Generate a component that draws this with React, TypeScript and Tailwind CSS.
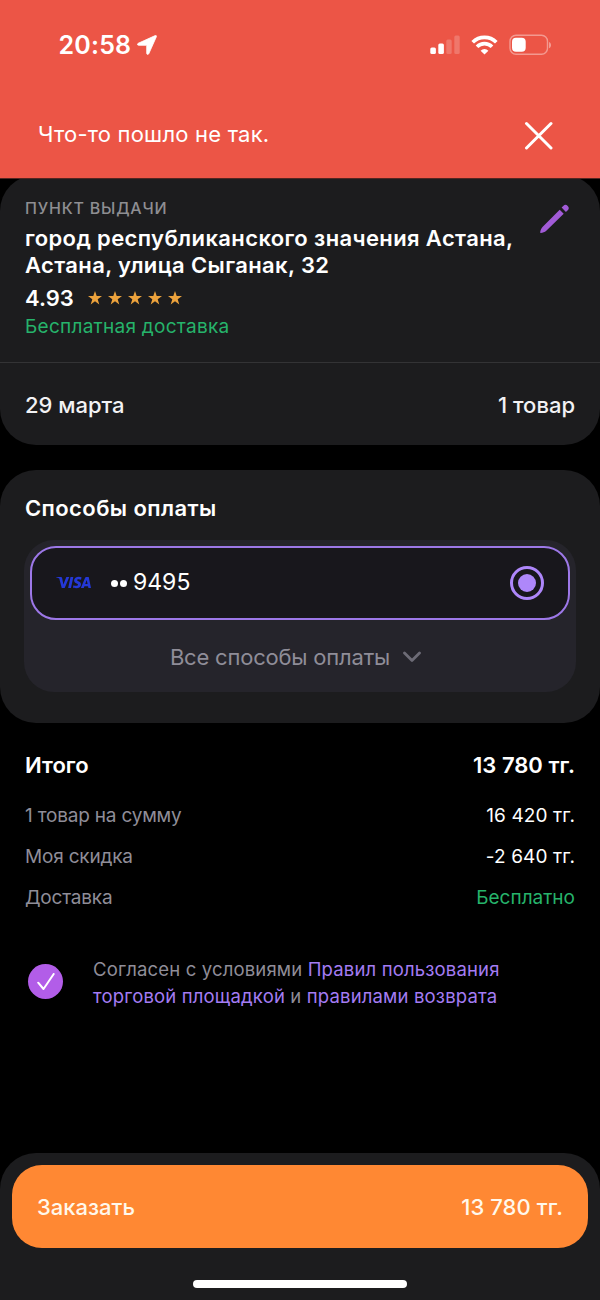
import { ReactNode } from "react";
import { SiVisa } from "react-icons/si";

function StatusBar() {
  return (
    <div className="flex h-[90px] items-center justify-between pl-[58.5px] pr-[48px]">
      <div className="flex items-center gap-[6px]">
        <span className="text-[25px] font-semibold leading-[30px] tracking-[0.2px]">20:58</span>
        <svg width="20" height="20" viewBox="0 0 20 20" fill="currentColor" stroke="currentColor" strokeWidth="0.8" strokeLinejoin="round">
          <path d="M18.2.6 1.200 8.300c-1.100.6-1 2 .4 2h7.600c.3 0 .5.200.5.500v7.500c0 1.400 1.500 1.600 2.100.4L19.400 1.700c.4-.8-.4-1.500-1.200-1.100z" />
        </svg>
      </div>
      <div className="flex items-center">
        <svg width="30" height="20" viewBox="0 0 30 20" fill="currentColor">
          <rect x="0.300" y="12.500" width="5.600" height="6.500" rx="1.500" />
          <rect x="8.300" y="8.500" width="5.600" height="10.500" rx="1.500" />
          <rect x="16.300" y="4.500" width="5.400" height="14.500" rx="1.500" opacity="0.200" />
          <rect x="24.300" y="0.500" width="5.400" height="18.500" rx="1.500" opacity="0.200" />
        </svg>
        <svg className="ml-[11px]" width="27" height="20" viewBox="0 0 27 20" fill="none" stroke="currentColor" strokeWidth="3.700">
          <path d="M1.700 7.200a16.800 16.800 0 0 1 23.600 0" />
          <path d="M6 11.700a10.700 10.700 0 0 1 15 0" />
          <path d="M13.500 19.500 9.600 15.700a5.600 5.600 0 0 1 7.800 0z" fill="currentColor" stroke="none" />
        </svg>
        <svg className="ml-[11px]" width="43" height="22" viewBox="0 0 43 22" fill="none">
          <rect x="1" y="1.200" width="37.500" height="19" rx="6" stroke="currentColor" strokeWidth="1.400" opacity="0.400" />
          <rect x="3" y="3.700" width="13.700" height="14" rx="4" fill="currentColor" />
          <path d="M40.200 8v6.200c2.200-1 2.200-5.200 0-6.200z" fill="currentColor" opacity="0.500" />
        </svg>
      </div>
    </div>
  );
}

function ErrorBanner() {
  return (
    <header className="relative z-10 h-[178px] bg-[#ec5546] shadow-[0_1px_0_#532621]">
      <StatusBar />
      <div className="flex h-[90px] items-center justify-between pl-[38px] pr-[46px]">
        <p className="pb-[2px] text-[22px] leading-[28px] tracking-[0.2px]">Что-то пошло не так.</p>
        <button aria-label="Закрыть">
          <svg width="30" height="30" viewBox="0 0 30 30" fill="none" stroke="currentColor" strokeWidth="3" strokeLinecap="round">
            <path d="M2.500 3.500 27 28M27 3.500 2.500 28" />
          </svg>
        </button>
      </div>
    </header>
  );
}

function Stars() {
  return (
    <div className="flex gap-[6px] text-[#eca23c]">
      {[1, 2, 3, 4, 5].map((n) => (
        <svg key={n} width="14" height="14" viewBox="0 0 14 14" fill="currentColor">
          <path d="M7 0l1.700 5H14L9.700 8.200l1.600 5.200L7 10.200l-4.300 3.200 1.600-5.200L0 5h5.300z" />
        </svg>
      ))}
    </div>
  );
}

function PickupCard() {
  return (
    <section className="-mt-[3px] h-[270px] rounded-[36px] bg-[#1c1c1e]">
      <div className="flex h-[187px] justify-between pl-[25px] pr-[30px] pt-[23px]">
        <div>
          <p className="text-[16px] font-medium leading-[20px] tracking-[0.8px] text-[#8e8e92]">ПУНКТ ВЫДАЧИ</p>
          <h2 className="mt-[7px] whitespace-nowrap text-[22px] font-semibold leading-[27px] tracking-[0.38px]">
            город республиканского значения Астана,
            <br />
            Астана, улица Сыганак, 32
          </h2>
          <div className="mt-[5px] flex items-center gap-[14px]">
            <span className="text-[22px] font-semibold leading-[28px]">4.93</span>
            <Stars />
          </div>
          <p className="mt-[3px] text-[19px] leading-[24px] tracking-[0.27px] text-[#26b36b]">Бесплатная доставка</p>
        </div>
        <button aria-label="Изменить" className="mt-[6px] self-start text-[#a15bd7]">
          <svg width="30" height="30" viewBox="0 0 30 30" fill="currentColor">
            <path d="M19.700 5.700 23.700 9.700 6.300 26.700c-1.600 1.400-3.500 2.100-5.500 2.300-.5 0-.7-.3-.6-.8.300-2 .9-3.700 2.300-5.300z" />
            <path d="m21.600 3.600 1.900-1.900c1.300-1.300 2.900-1 4.200.3s1.500 2.800.3 4.100L25.900 8z" />
          </svg>
        </button>
      </div>
      <div className="flex h-[83px] items-center justify-between border-t border-[#333335] px-[25px] pt-[2px] text-[22px] font-medium text-[#f2f2f4]">
        <span>29 марта</span>
        <span>1 товар</span>
      </div>
    </section>
  );
}

function PaymentCard() {
  return (
    <section className="mt-[25px] h-[253px] rounded-[36px] bg-[#1c1c1e] px-[24px] pt-[24px]">
      <h2 className="pl-px text-[22px] font-semibold leading-[28px] tracking-[0.4px]">Способы оплаты</h2>
      <div className="mt-[18px] h-[152px] rounded-[30px] bg-[#25242b] p-[6px]">
        <div className="flex h-[74px] items-center rounded-[26px] border-2 border-[#9d78e8] bg-[#18171c] px-[24px]">
          <SiVisa size={35} className="mb-px text-[#2438d6]" />
          <div className="ml-[20px] flex gap-[2px]">
            <span className="size-[7px] rounded-full bg-white" />
            <span className="size-[7px] rounded-full bg-white" />
          </div>
          <span className="ml-[6px] pb-[2px] text-[23px]">9495</span>
          <span className="ml-auto flex size-[34px] items-center justify-center rounded-full border-3 border-[#ae87fa]">
            <span className="size-[18px] rounded-full bg-[#ae87fa]" />
          </span>
        </div>
        <button className="flex h-[73px] w-full items-center justify-center gap-[13px] pr-[9px] pt-px text-[22px] tracking-[-0.2px] text-[#8f8d98]">
          Все способы оплаты
          <svg width="18" height="12" viewBox="0 0 18 12" fill="none" stroke="#6d6b76" strokeWidth="2.800" strokeLinecap="round" strokeLinejoin="round">
            <path d="m1.500 2 7.500 7.500L16.500 2" />
          </svg>
        </button>
      </div>
    </section>
  );
}

function SummaryRow({ label, children }: { label: string; children: ReactNode }) {
  return (
    <div className="flex h-[41px] items-center justify-between text-[19px]">
      <span className="tracking-[-0.2px] text-[#8f8d98]">{label}</span>
      {children}
    </div>
  );
}

function Summary() {
  return (
    <section className="px-[25px] pt-[27px]">
      <div className="flex h-[30px] items-center justify-between text-[22px] font-semibold">
        <span>Итого</span>
        <span>13 780 тг.</span>
      </div>
      <div className="mt-[16px]">
        <SummaryRow label="1 товар на сумму">
          <span className="tracking-[0.1px]">16 420 тг.</span>
        </SummaryRow>
        <SummaryRow label="Моя скидка">
          <span className="tracking-[0.1px]">-2 640 тг.</span>
        </SummaryRow>
        <SummaryRow label="Доставка">
          <span className="text-[#26b36b]">Бесплатно</span>
        </SummaryRow>
      </div>
    </section>
  );
}

function Agreement() {
  return (
    <div className="mt-[37px] flex pl-[28px]">
      <span className="mt-[8px] flex size-[35px] items-center justify-center rounded-full bg-[#b25de8]">
        <svg width="18" height="18" viewBox="0 0 18 18" fill="none" stroke="#fff" strokeWidth="2" strokeLinecap="round" strokeLinejoin="round">
          <path d="m1.200 9.700 5.300 6.300L16.700 1" />
        </svg>
      </span>
      <p className="ml-[30px] whitespace-nowrap text-[18.5px] leading-[27px] tracking-[0.16px] text-[#8f8d98]">
        Согласен с условиями <a className="text-[#a47cf3]">Правил пользования</a>
        <br />
        <a className="text-[#a47cf3]">торговой площадкой</a> и <a className="text-[#a47cf3]">правилами возврата</a>
      </p>
    </div>
  );
}

function OrderBar() {
  return (
    <footer className="mt-auto h-[147px] rounded-t-[36px] bg-[#1c1c1e] px-[12px] pt-[12px]">
      <button className="flex h-[83px] w-full items-center justify-between rounded-[30px] bg-[#ff8833] px-[25px] pt-[2px] text-[22px] font-medium text-[#fff8ec]">
        <span>Заказать</span>
        <span className="tracking-[0.1px]">13 780 тг.</span>
      </button>
      <div className="mx-auto mt-[32px] h-[8px] w-[214px] rounded-full bg-white" />
    </footer>
  );
}

export default function App() {
  return (
    <main className="flex h-[1300px] w-[600px] flex-col overflow-hidden bg-black font-['Inter',sans-serif] text-white">
      <ErrorBanner />
      <PickupCard />
      <PaymentCard />
      <Summary />
      <Agreement />
      <OrderBar />
    </main>
  );
}
